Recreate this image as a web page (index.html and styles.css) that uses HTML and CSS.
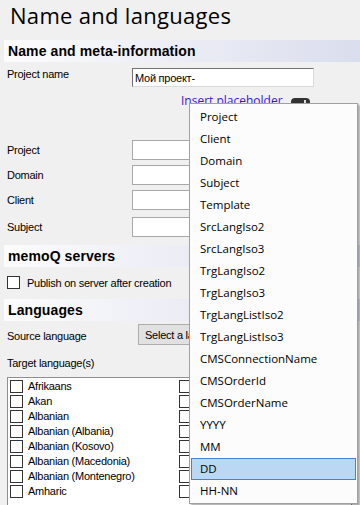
FILE: index.html
```html
<!DOCTYPE html>
<html lang="en">
  <head>
    <meta charset="UTF-8" />
    <meta name="viewport" content="width=device-width, initial-scale=1.0" />
    <title>Name and languages</title>
    <link rel="stylesheet" href="styles.css">
  </head>
  <body>
    <div class="wrapper">
      <header>
        <h1>Name and languages</h1>
      </header>
      <main>
        <!-- name and meta -->
        <section class="panel meta">
          <h2>Name and meta-information</h2>
          <div class="name_row">
            <label>Project name</label>
            <input type="text" class="name_input" value="Мой проект-" />
          </div>
          <div class="placeholder_row">
            <a href="">Insert placeholder</a>
            <span class="ph_icon"></span>
          </div>
          <ul class="fields">
            <li><label>Project</label><input type="text" /></li>
            <li><label>Domain</label><input type="text" /></li>
            <li><label>Client</label><input type="text" /></li>
            <li><label>Subject</label><input type="text" /></li>
          </ul>
        </section>

        <!-- servers -->
        <section class="panel servers">
          <h2>memoQ servers</h2>
          <div class="check_row">
            <span class="chk"></span>
            <span>Publish on server after creation</span>
          </div>
        </section>

        <!-- languages -->
        <section class="panel languages">
          <h2>Languages</h2>
          <div class="source_row">
            <label>Source language</label>
            <button type="button">Select a language</button>
          </div>
          <p class="target_label">Target language(s)</p>
          <div class="lang_list">
            <ul>
              <li><span class="chk"></span>Afrikaans</li>
              <li><span class="chk"></span>Akan</li>
              <li><span class="chk"></span>Albanian</li>
              <li><span class="chk"></span>Albanian (Albania)</li>
              <li><span class="chk"></span>Albanian (Kosovo)</li>
              <li><span class="chk"></span>Albanian (Macedonia)</li>
              <li><span class="chk"></span>Albanian (Montenegro)</li>
              <li><span class="chk"></span>Amharic</li>
            </ul>
            <!-- second column, only the boxes show beside the menu -->
            <ul>
              <li><span class="chk"></span></li>
              <li><span class="chk"></span></li>
              <li><span class="chk"></span></li>
              <li><span class="chk"></span></li>
              <li><span class="chk"></span></li>
              <li><span class="chk"></span></li>
              <li><span class="chk"></span></li>
              <li><span class="chk"></span></li>
            </ul>
          </div>
        </section>
      </main>

      <!-- placeholder menu (open) -->
      <ul class="menu">
        <li>Project</li>
        <li>Client</li>
        <li>Domain</li>
        <li>Subject</li>
        <li>Template</li>
        <li>SrcLangIso2</li>
        <li>SrcLangIso3</li>
        <li>TrgLangIso2</li>
        <li>TrgLangIso3</li>
        <li>TrgLangListIso2</li>
        <li>TrgLangListIso3</li>
        <li>CMSConnectionName</li>
        <li>CMSOrderId</li>
        <li>CMSOrderName</li>
        <li>YYYY</li>
        <li>MM</li>
        <li class="active">DD</li>
        <li>HH-NN</li>
      </ul>
    </div>
  </body>
</html>
```

FILE: styles.css
```css
* {
  box-sizing: border-box;
}
ul {
  list-style: none;
  margin: 0;
  padding: 0;
}
a {
  text-decoration: none;
}
body {
  margin: 0;
  background-color: #f0f0f0;
  font-family: "Liberation Sans", Arial, sans-serif;
  font-size: 11px;
  letter-spacing: -0.25px;
  color: #000;
}
input,
button {
  font-family: inherit;
  font-size: 11px;
  letter-spacing: -0.25px;
  color: #000;
  margin: 0;
}

.wrapper {
  position: relative;
  width: 360px;
  height: 505px;
  overflow: hidden;
}
.wrapper > header > h1 {
  margin: 0;
  height: 40px;
  padding-left: 10px;
  font-family: "Open Sans", sans-serif;
  font-weight: 400;
  font-size: 22px;
  line-height: 30px;
  letter-spacing: 0.3px;
}

/* section bars */
.panel > h2 {
  margin: 0 0 0 4px;
  height: 22px;
  padding-left: 4px;
  font-size: 14px;
  font-weight: bold;
  line-height: 22px;
  letter-spacing: 0.1px;
  background: linear-gradient(to right, #fcfcfd, #dadded);
}
.panel.servers {
  margin-top: 8px;
}
.panel.languages {
  margin-top: 10px;
}

/* name and meta */
.name_row {
  display: flex;
  align-items: flex-start;
  margin-top: 6px;
  padding-left: 7px;
}
.name_row > label {
  width: 125px;
  line-height: 13px;
}
.name_row > .name_input {
  width: 182px;
  height: 19px;
  padding: 0 2px;
  border: 1px solid;
  border-color: #707070 #dadada #dadada #707070;
  background-color: #fff;
}
.placeholder_row {
  display: flex;
  align-items: flex-start;
  height: 16px;
  margin-top: 6px;
  padding-left: 181px;
}
.placeholder_row > a {
  font-family: "Open Sans", sans-serif;
  font-size: 12px;
  line-height: 16px;
  letter-spacing: 0;
  color: #3816cc;
}
.placeholder_row > .ph_icon {
  position: relative;
  width: 19px;
  height: 12px;
  margin: 5px 0 0 8px;
  border-radius: 4px;
  background-color: #333;
}
.placeholder_row > .ph_icon::after {
  content: "";
  position: absolute;
  right: 4px;
  top: 2px;
  width: 2px;
  height: 5px;
  background-color: #ddd;
}
.fields {
  margin-top: 31px;
}
.fields > li {
  display: flex;
  align-items: center;
  height: 20px;
  padding-left: 7px;
  margin-top: 5px;
}
.fields > li:first-child {
  margin-top: 0;
}
.fields > li:last-child {
  margin-top: 7px;
}
.fields > li > label {
  width: 125px;
}
.fields > li > input {
  width: 60px;
  height: 20px;
  border: 1px solid #a8a8a8;
  background-color: #fff;
}

/* checkbox */
.chk {
  display: inline-block;
  flex: none;
  width: 13px;
  height: 13px;
  border: 1px solid #333;
  background-color: #fff;
}
.check_row {
  display: flex;
  align-items: center;
  height: 13px;
  margin-top: 9px;
  padding-left: 7px;
  gap: 7px;
}

/* languages */
.source_row {
  display: flex;
  align-items: center;
  margin-top: 3px;
  padding-left: 7px;
}
.source_row > label {
  width: 131px;
  padding-top: 2px;
}
.source_row > button {
  width: 53px;
  height: 21px;
  padding: 0 0 0 6px;
  overflow: hidden;
  white-space: nowrap;
  text-align: left;
  border: 1px solid #adadad;
  background-color: #e1e1e1;
}
.target_label {
  margin: 11px 0 0;
  padding-left: 7px;
  line-height: 14px;
}
.lang_list {
  display: flex;
  width: 345px;
  height: 140px;
  margin: 7px 0 0 7px;
  padding: 1px 0 0 2px;
  border: 1px solid #8f8f8f;
  background-color: #fff;
}
.lang_list > ul {
  width: 169px;
}
.lang_list > ul > li {
  display: flex;
  align-items: center;
  height: 15px;
  gap: 5px;
  line-height: 15px;
  white-space: nowrap;
}

/* popup menu, lies over the form */
.menu {
  position: absolute;
  left: 189px;
  top: 103px;
  width: 169px;
  height: 401px;
  padding: 2px 0 1px;
  border: 1px solid #a0a0a0;
  background-color: #fcfcfc;
  box-shadow: 2px 2px 2px rgba(0, 0, 0, 0.3);
  font-family: "Open Sans", sans-serif;
  font-size: 11.5px;
  letter-spacing: 0;
}
.menu > li {
  height: 22px;
  margin: 0 1px;
  padding-left: 8px;
  border: 1px solid transparent;
  line-height: 20px;
}
.menu > li.active {
  border-color: #3a87d6;
  background-color: #bad7f3;
}
```
